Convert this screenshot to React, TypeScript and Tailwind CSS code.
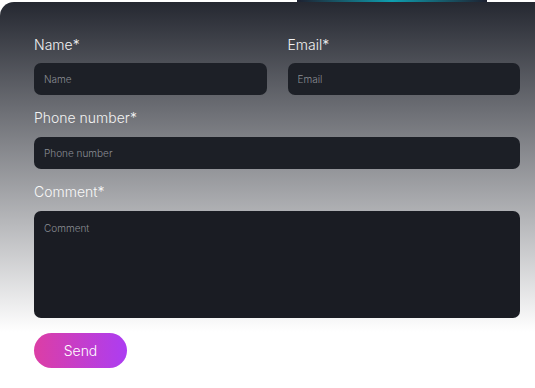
import React from "react";

export default function App() {
  const font = { fontFamily: "Inter, 'Noto Sans', sans-serif" };
  return (
    <div className="w-[535px] h-[388px] bg-white overflow-hidden" style={font}>
      <div className="h-[2px] flex">
        <div className="ml-[297px] w-[190px] h-[2px] bg-[linear-gradient(to_right,#1e2030,#0e9fb0_50%,#1e2030)]" />
      </div>
      <div className="rounded-tl-[14px] bg-[linear-gradient(to_bottom,#252831_0px,#ffffff_330px)] pl-[34px] pr-[15px] pt-[33px] pb-[20px]">
        <div className="grid grid-cols-2 gap-x-[21px]">
          <div className="flex flex-col">
            <label className="text-[14px] font-light leading-[20px] text-[#f2f2f2]">Name*</label>
            <input
              placeholder="Name"
              className="mt-[8px] h-[32px] rounded-[7px] bg-[#1d2027] px-[10px] text-[10px] font-light text-white placeholder:text-[#8b8e95] outline-none"
            />
          </div>
          <div className="flex flex-col">
            <label className="text-[14px] font-light leading-[20px] text-[#f2f2f2]">Email*</label>
            <input
              placeholder="Email"
              className="mt-[8px] h-[32px] rounded-[7px] bg-[#1d2027] px-[10px] text-[10px] font-light text-white placeholder:text-[#8b8e95] outline-none"
            />
          </div>
        </div>
        <div className="flex flex-col mt-[13px]">
          <label className="text-[14px] font-light leading-[20px] text-[#f2f2f2]">Phone number*</label>
          <input
            placeholder="Phone number"
            className="mt-[9px] h-[32px] rounded-[7px] bg-[#1c1f26] px-[10px] text-[10px] font-light text-white placeholder:text-[#8b8e95] outline-none"
          />
        </div>
        <div className="flex flex-col mt-[13px]">
          <label className="text-[14px] font-light leading-[20px] text-[#f8f8f8]">Comment*</label>
          <textarea
            placeholder="Comment"
            className="mt-[9px] h-[107px] resize-none rounded-[7px] bg-[#1a1c23] px-[10px] pt-[10px] text-[10px] font-light text-white placeholder:text-[#8b8e95] outline-none"
          />
        </div>
        <button className="mt-[15px] w-[93px] h-[35px] rounded-full bg-[linear-gradient(to_right,#dc3ea5,#ac3df2)] text-[14px] font-light text-white">
          Send
        </button>
      </div>
    </div>
  );
}
